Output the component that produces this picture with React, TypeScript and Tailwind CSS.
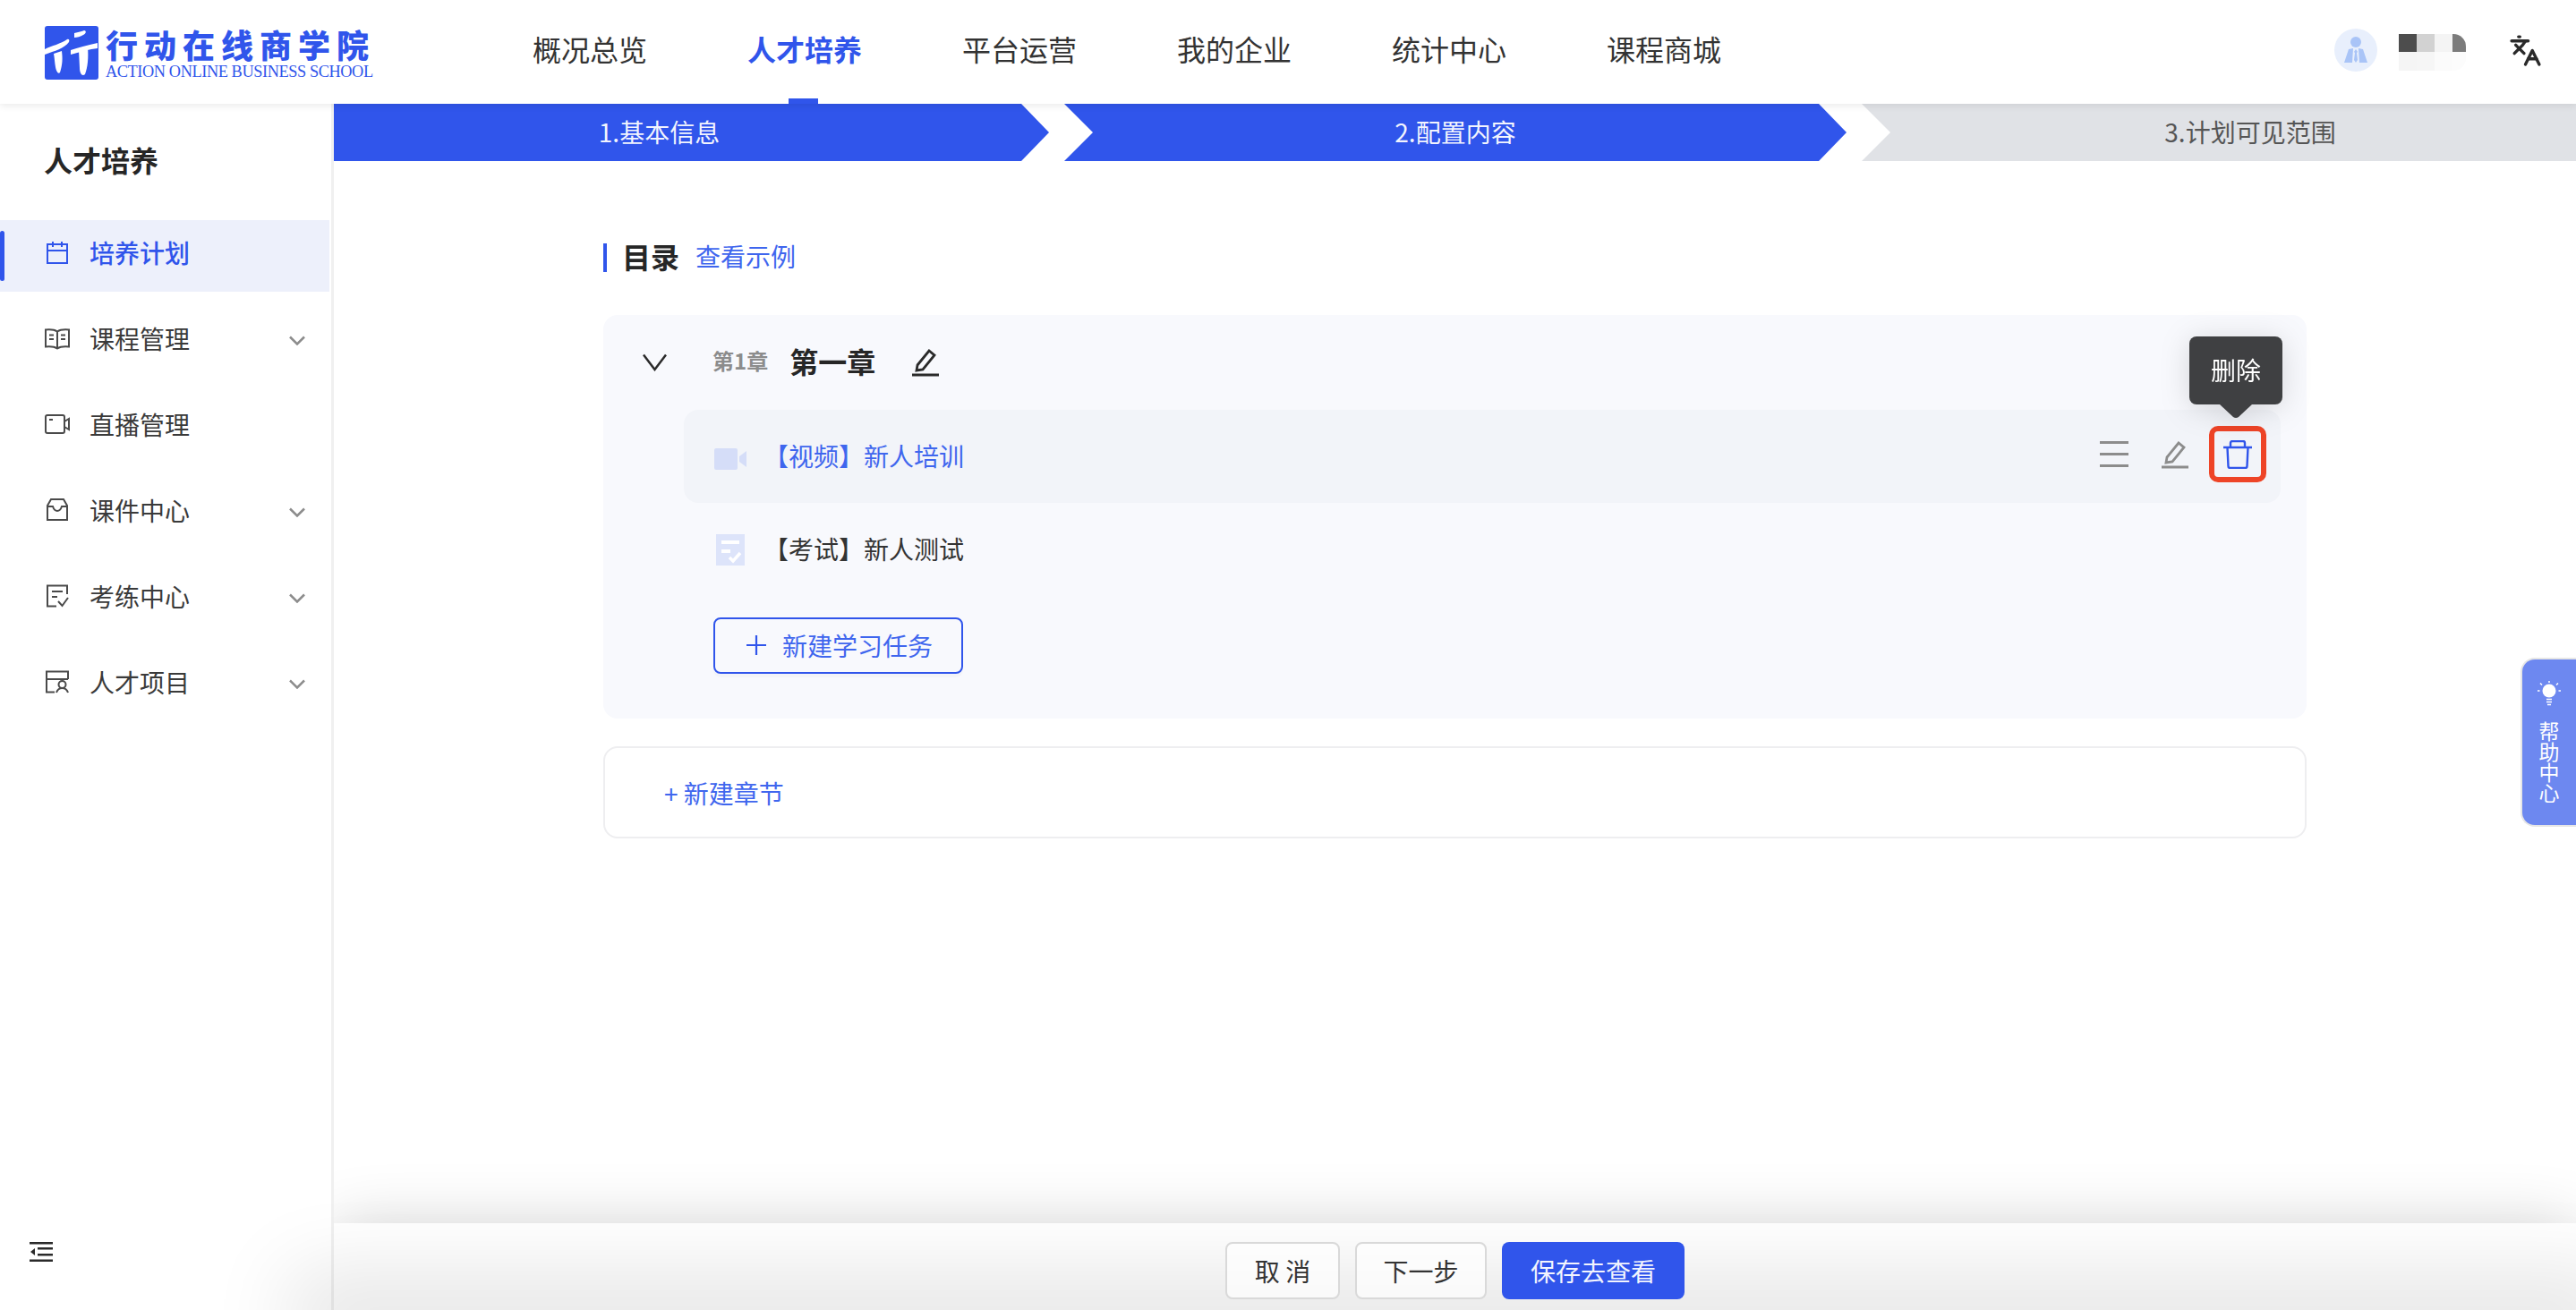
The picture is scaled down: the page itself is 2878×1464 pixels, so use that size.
import React from "react";
import { Languages } from "lucide-react";

const G = "#4a4a4a";
const Svg = ({ children, s = 28, c = G, w = 2, box = 28 }: any) => (
  <svg width={s} height={s} viewBox={`0 0 ${box} ${box}`} fill="none" stroke={c} strokeWidth={w} className="shrink-0">{children}</svg>
);

const IconPlan = () => (
  <Svg c="#3055eb"><rect x="3" y="5" width="22" height="21" /><path d="M3 12h22M9 2v6M19 2v6" /></Svg>
);
const IconBook = () => (
  <Svg><path d="M14 6.500C11 4.500 6 4 1 4.500v19c5-.5 10 0 13 2 3-2 8-2.500 13-2v-19c-5-.500-10 0-13 2zM14 6.500v19M5 10.500h5M5 15h5M18 10.500h5M18 15h5" /></Svg>
);
const IconLive = () => (
  <Svg><rect x="1" y="4" width="21" height="20" rx="2" /><path d="M22 11l5-3v12l-5-3M5 9h4" /></Svg>
);
const IconWare = () => (
  <Svg><path d="M7 2h14l4 7v16H3V9zM3 10h6c1 3 3 5 5 5s4-2 5-5h6" /></Svg>
);
const IconExam = () => (
  <Svg><path d="M25 12V2.500H3V25.500h10M8 9h12M8 15h6M15 20l4.500 5L26 16" /></Svg>
);
const IconProject = () => (
  <Svg><path d="M26 11V2.500H2V25.500h9M2 11h24" /><circle cx="19.500" cy="17" r="4" /><path d="M13 26c1-3 3.500-5 6.500-5s5.500 2 6.500 5" /></Svg>
);
const Chevron = () => (
  <svg width="18" height="11" viewBox="0 0 18 11" fill="none" stroke="#8c8c8c" strokeWidth="2.500" className="shrink-0"><path d="M1 1.500l8 8 8-8" /></svg>
);
const Pencil = ({ c, w = 2.800 }: { c: string; w?: number }) => (
  <Svg s={32} box={32} c={c} w={w}><path d="M7 19L20 3l6 5L13 24l-7 1zM1 30h30" /></Svg>
);

const Logo = () => (
  <div className="flex items-start gap-[8px] mt-[1px]">
    <svg width="60" height="60" viewBox="0 0 60 60" className="shrink-0">
      <rect width="60" height="60" rx="3" fill="#3055eb" />
      <path d="M0 26C8 22 18 20 25 15c2-1 3 1 2 3-5 7-16 10-27 14zM29 27c8-3 18-5 30-8v6c-9 1-19 4-30 7zM33 8c4-1 9-2 11-3 3 0 2 4-1 5-3 2-7 3-10 3zM10 31l9-3c1 8 1 15-2 24-2 2-4-1-5-6-1-5-1-10-2-15zM38 27l10-3c1 11 0 22-3 30-3 3-6-1-6-7z" fill="#fff" />
    </svg>
    <div className="flex flex-col">
      <span className="text-[36px] leading-[40px] font-black text-[#3055eb] tracking-[7px] whitespace-nowrap">行动在线商学院</span>
      <span className="font-['Liberation_Serif',serif] text-[18.300px] leading-[16px] mt-[3px] text-[#3055eb] whitespace-nowrap tracking-[-0.400px]">ACTION ONLINE BUSINESS SCHOOL</span>
    </div>
  </div>
);

const navs = ["概况总览", "人才培养", "平台运营", "我的企业", "统计中心", "课程商城"];

const Header = () => (
  <header className="relative z-20 h-[116px] shrink-0 bg-white flex items-center shadow-[0_2px_8px_rgba(0,0,0,0.09)]">
    <div className="ml-[50px] w-[545px] shrink-0"><Logo /></div>
    <nav className="flex gap-[112px] h-full">
      {navs.map((n, i) => (
        <div key={n} className={`relative h-full flex items-center text-[32px] pb-[8px] ${i === 1 ? "text-[#3055eb] font-semibold" : "text-[#333333]"}`}>
          {n}
          {i === 1 && <span className="absolute bottom-0 left-[46px] w-[33px] h-[6px] bg-[#3055eb]" />}
        </div>
      ))}
    </nav>
    <div className="ml-auto flex items-center">
      <div className="mb-[4px] w-[48px] h-[48px] rounded-full bg-[#e8effc] flex items-center justify-center">
        <svg width="28" height="30" viewBox="0 0 28 30" fill="#a9c4f7"><circle cx="14" cy="6" r="6" /><path d="M6 14l5-1-1 16H1zM22 14l-5-1 1 16h9z" /><path d="M14 14l2 3-1 1 1 8-2 3-2-3 1-8-1-1z" /></svg>
      </div>
      <div className="ml-[24px] w-[75px] h-[41px] grid grid-cols-[20px_20px_20px_15px] grid-rows-2 rounded-r-[14px] overflow-hidden">
        <span className="bg-[#4d4d4d]" /><span className="bg-[#d2d2d2]" /><span className="bg-[#f4f4f4]" /><span className="bg-[#7c7c7c]" />
        <span className="bg-[#f5f5f5]" /><span className="bg-[#f6f6f6]" /><span className="bg-[#fbfbfb]" /><span className="bg-[#fcfcfc]" />
      </div>
      <Languages size={37} strokeWidth={2.200} color="#2a2a2a" className="ml-[48px] mr-[38px] mb-[3px]" />
    </div>
  </header>
);

const menu = [
  { t: "课程管理", I: IconBook, c: true },
  { t: "直播管理", I: IconLive, c: false },
  { t: "课件中心", I: IconWare, c: true },
  { t: "考练中心", I: IconExam, c: true },
  { t: "人才项目", I: IconProject, c: true },
];

const Sidebar = () => (
  <aside className="w-[373px] shrink-0 border-r-[3px] border-[#f0f0f0] bg-white flex flex-col relative">
    <div className="h-[130px] pl-[49px] pb-[6px] flex items-center text-[32px] font-semibold text-[#262626]">人才培养</div>
    <div className="flex flex-col gap-[16px] w-[368px]">
      <div className="relative h-[80px] bg-[#edf0fb] flex items-center pl-[50px] pb-[8px] gap-[22px] text-[28px] font-medium text-[#3055eb]">
        <span className="absolute left-0 top-[12px] w-[5px] h-[56px] rounded-full bg-[#3055eb]" />
        <IconPlan />
        培养计划
      </div>
      {menu.map(({ t, I, c }) => (
        <div key={t} className="h-[80px] flex items-center pl-[50px] pb-[8px] gap-[22px] text-[28px] text-[#3a3a3a]">
          <I />
          <span className="flex-1">{t}</span>
          {c && <span className="mr-[27px] mt-[5px]"><Chevron /></span>}
        </div>
      ))}
    </div>
    <div className="mt-auto pl-[33px] pb-[54px]">
      <svg width="26" height="22" viewBox="0 0 26 22" fill="#2a2a2a" className="block"><rect y="0" width="26" height="2.500" /><rect x="9" y="6" width="17" height="2.500" /><rect x="9" y="13" width="17" height="2.500" /><rect y="19.500" width="26" height="2.500" /><path d="M1 11l5-4v8z" /></svg>
    </div>
  </aside>
);

const Steps = () => (
  <div className="flex gap-[17px] h-[64px] shrink-0 text-[28px]">
    <div className="w-[799px] pr-[72px] pb-[2px] bg-[#3055eb] text-[#f2f4fe] flex items-center justify-center [clip-path:polygon(0_0,calc(100%-31px)_0,100%_50%,calc(100%-31px)_100%,0_100%)]">1.基本信息</div>
    <div className="w-[874px] pb-[2px] bg-[#3055eb] text-[#f2f4fe] flex items-center justify-center [clip-path:polygon(0_0,calc(100%-31px)_0,100%_50%,calc(100%-31px)_100%,0_100%,32px_50%)]">2.配置内容</div>
    <div className="w-[798px] pl-[70px] pb-[2px] bg-[#e0e2e6] text-[#555555] flex items-center justify-center [clip-path:polygon(0_0,100%_0,100%_100%,0_100%,32px_50%)]">3.计划可见范围</div>
  </div>
);

const Content = () => (
  <div className="flex-1 min-h-0 px-[301px] pt-[92px]">
    <div className="flex items-start h-[32px]">
      <span className="w-[4px] h-[32px] bg-[#3055eb]" />
      <span className="ml-[17px] h-[32px] leading-[28px] text-[32px] font-semibold text-[#262626]">目录</span>
      <span className="ml-[18px] h-[32px] leading-[28px] text-[28px] text-[#3f66ee]">查看示例</span>
    </div>
    <div className="mt-[48px] h-[451px] rounded-[16px] bg-[#f8f9fd]">
      <div className="h-[106px] pl-[44px] flex items-center">
        <svg width="27" height="20" viewBox="0 0 27 20" fill="none" stroke="#2a2a2a" strokeWidth="2.500" className="shrink-0"><path d="M1 1.500L13.500 18 26 1.500" /></svg>
        <span className="ml-[51px] text-[24px] font-semibold text-[#8c8c8c] mb-[4px]">第1章</span>
        <span className="ml-[24px] text-[32px] font-semibold text-[#262626] mb-[4px]">第一章</span>
        <span className="ml-[40px] flex"><Pencil c="#2a2a2a" /></span>
      </div>
      <div className="ml-[90px] mr-[29px]">
        <div className="relative h-[104px] rounded-[16px] bg-[#f2f4f9] pl-[34px] pr-[16px] flex items-center">
          <span className="w-[36px] flex justify-center mt-[6px]">
            <svg width="36" height="24" viewBox="0 0 36 24" fill="#d5ddf8"><rect width="26" height="24" rx="2" /><path d="M28 9l8-6v18l-8-6z" /></svg>
          </span>
          <span className="ml-[19px] flex-1 text-[28px] text-[#3f66ee] mb-[2px]">【视频】新人培训</span>
          <div className="flex items-center mb-[5px]">
            <svg width="32" height="29" viewBox="0 0 32 29" fill="#8c8c8c" className="shrink-0"><rect width="32" height="3" /><rect y="13" width="32" height="3" /><rect y="26" width="32" height="3" /></svg>
            <span className="ml-[36px] flex"><Pencil c="#8c8c8c" /></span>
            <span className="ml-[22px] w-[64px] h-[63px] rounded-[10px] border-[6px] border-[#ee4427] flex items-center justify-center">
              <Svg s={32} box={32} c="#3055eb" w={2.400}><path d="M0 8h32M4.500 8l1 21c0 1 1 2 2 2h17c1 0 2-1 2-2l1-21M8 8V3c0-1 1-2 2-2h12c1 0 2 1 2 2v5" /></Svg>
            </span>
          </div>
          <div className="absolute right-[-2px] top-[-82px] flex flex-col items-center drop-shadow-[0_4px_16px_rgba(0,0,0,0.14)]">
            <div className="w-[104px] h-[76px] rounded-[8px] bg-[#3f4042] text-white text-[28px] flex items-center justify-center pb-[2px]">删除</div>
            <svg width="36" height="15" viewBox="0 0 36 15" fill="#3f4042" className="block"><path d="M0 0h36L21 14c-1.500 1.300-4.500 1.300-6 0z" /></svg>
          </div>
        </div>
        <div className="h-[104px] pl-[34px] flex items-center">
          <span className="w-[36px] flex justify-center">
            <svg width="32" height="35" viewBox="0 0 32 35" className="shrink-0"><rect width="32" height="35" fill="#dde4fa" /><rect x="6" y="7" width="20" height="4" fill="#fff" /><rect x="6" y="17" width="10" height="4" fill="#fff" /><path d="M15 26l4 4 8-9" fill="none" stroke="#fff" strokeWidth="3.500" /></svg>
          </span>
          <span className="ml-[19px] text-[28px] text-[#333333] mb-[3px]">【考试】新人测试</span>
        </div>
        <button className="mt-[24px] ml-[33px] w-[279px] h-[63px] rounded-[8px] border-2 border-[#3055eb] shadow-[0_4px_0_rgba(0,0,0,0.02)] flex items-center pl-[35px] pb-[2px] text-[28px] text-[#3f66ee]">
          <svg width="22" height="22" viewBox="0 0 22 22" stroke="#3055eb" strokeWidth="2.200" className="shrink-0"><path d="M11 0v22M0 11h22" /></svg>
          <span className="ml-[18px]">新建学习任务</span>
        </button>
      </div>
    </div>
    <div className="mt-[31px] h-[103px] rounded-[16px] border-2 border-[#eeeef0] pl-[66px] flex items-center text-[28px] text-[#3f66ee]">+ 新建章节</div>
  </div>
);

const Footer = () => (
  <div className="relative h-[97px] shrink-0 bg-white flex items-center justify-center gap-[17px] pt-[9px] text-[28px] shadow-[0_0_70px_rgba(0,0,0,0.16)]">
    <button className="w-[128px] h-[64px] rounded-[8px] border-2 border-[#d9d9d9] bg-white/70 text-[#333333] relative z-10">取 消</button>
    <button className="w-[147px] h-[64px] rounded-[8px] border-2 border-[#d9d9d9] bg-white/70 text-[#333333] relative z-10">下一步</button>
    <button className="w-[204px] h-[64px] rounded-[8px] bg-[#3055eb] text-[#f2f4fe] relative z-10">保存去查看</button>
  </div>
);

export default function App() {
  return (
    <div className="relative w-[2878px] h-[1464px] overflow-hidden flex flex-col bg-white font-['Noto_Sans_CJK_SC',sans-serif]">
      <Header />
      <div className="flex flex-1 min-h-0">
        <Sidebar />
        <main className="relative flex-1 min-w-0 flex flex-col overflow-hidden">
          <Steps />
          <Content />
          <Footer />
        </main>
      </div>
      <div className="pointer-events-none absolute left-[373px] right-0 bottom-[-6px] h-0 shadow-[0_0_90px_50px_rgba(0,0,0,0.1)] z-0" />
      <div className="absolute right-0 top-[735px] w-[62px] h-[189px] rounded-l-[16px] border-2 border-r-0 border-[#e6e6e6] bg-[#6d88f0] flex flex-col items-center z-30 pt-[24px]">
        <svg width="26" height="28" viewBox="0 0 26 28" fill="#fff" className="shrink-0"><circle cx="13" cy="11" r="7.500" /><path d="M13 0v2M3 2.500l2 2M23 2.500l-2 2M0 11h2.500M26 11h-2.500M10 20.500h6M10 23.500h6M11 26.500h4" stroke="#fff" strokeWidth="1.500" /></svg>
        <span className="mt-[16px] w-[24px] text-[23px] leading-[23px] text-white text-center">帮助中心</span>
      </div>
    </div>
  );
}
